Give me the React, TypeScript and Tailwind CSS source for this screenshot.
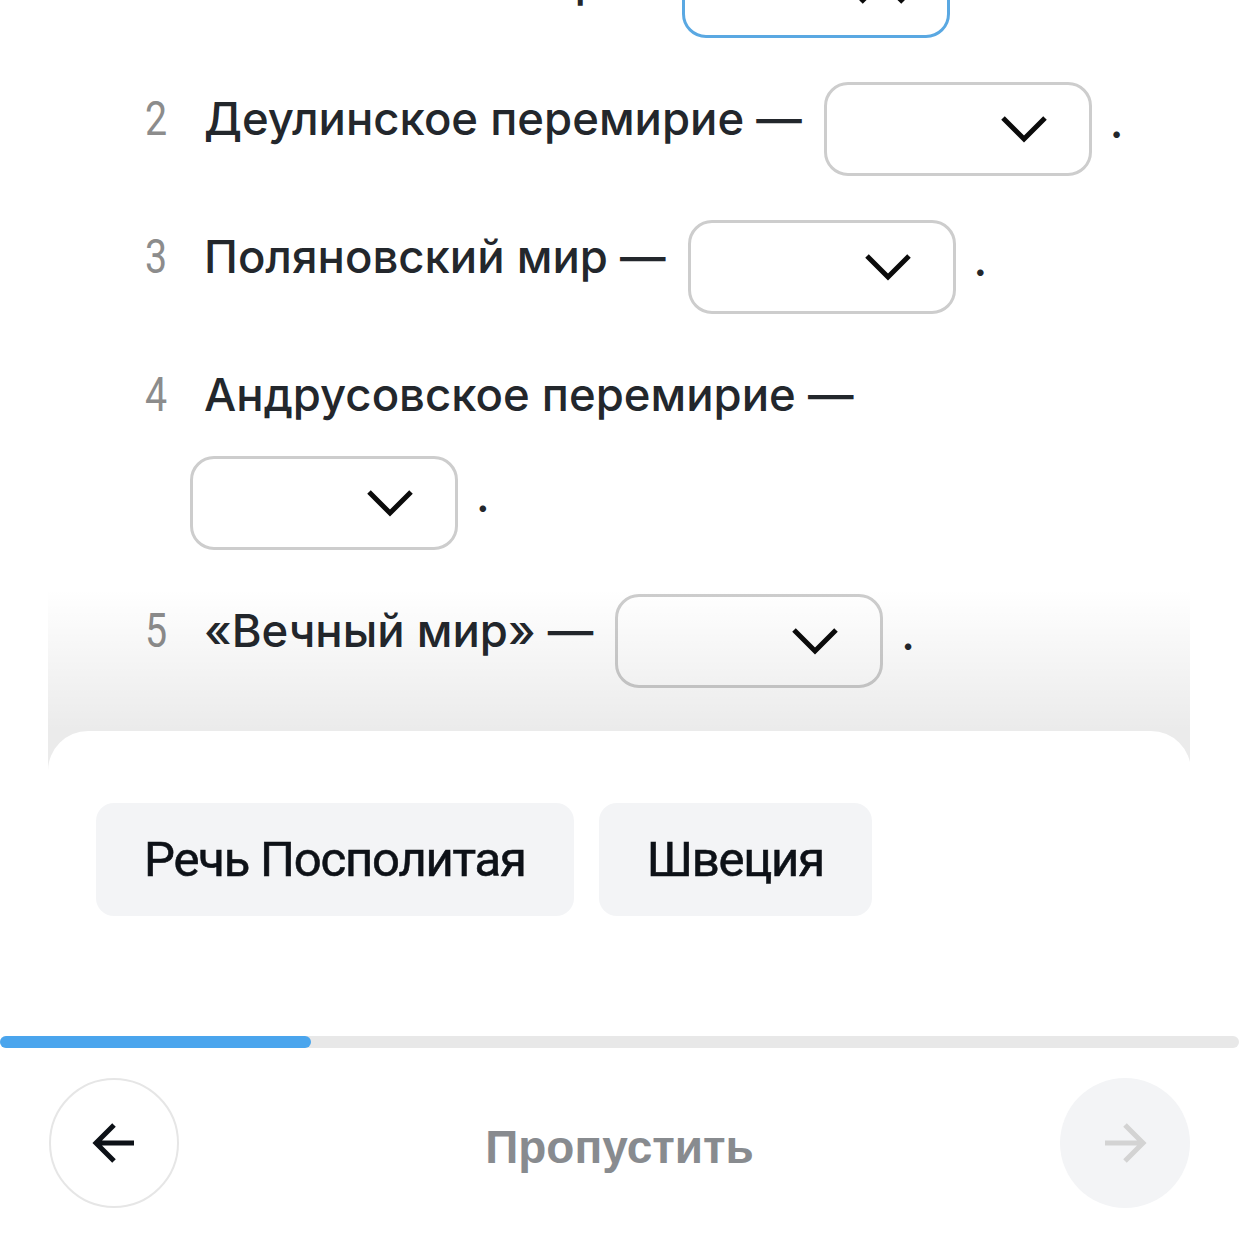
import { ReactNode } from "react";

const rows = [
  { n: 1, text: "Столбовский мир —", active: true },
  { n: 2, text: "Деулинское перемирие —" },
  { n: 3, text: "Поляновский мир —" },
  { n: 4, text: "Андрусовское перемирие —" },
  { n: 5, text: "«Вечный мир» —" },
];

const options = ["Речь Посполитая", "Швеция"];

const Chevron = ({ up }: { up?: boolean }) => (
  <svg width="48" height="28" viewBox="0 0 48 28" fill="none">
    <polyline
      points={up ? "3,25 24,4 45,25" : "3,3 24,24 45,3"}
      stroke="#0b0b0b"
      strokeWidth="5"
    />
  </svg>
);

const Select = ({ active }: { active?: boolean }) => (
  <div
    className={`w-[268px] h-[94px] rounded-[24px] border-[3px] flex items-center justify-end pr-[41px] bg-white ${
      active ? "border-[#5aa8e2]" : "border-[#cdcdcd]"
    }`}
  >
    <Chevron up={active} />
  </div>
);

const Line = ({ children }: { children: ReactNode }) => (
  <div className="h-[94px] flex items-center pb-[20px]">{children}</div>
);

export default function App() {
  return (
    <div className="w-full h-[1240px] bg-white overflow-hidden flex flex-col font-['Inter',sans-serif] text-[#23272c]">
      {/* Question list */}
      <div className="relative h-[771px] overflow-hidden">
        <div className="-mt-[56px] pl-[145px] flex flex-col gap-y-[44px]">
          {rows.map((row) => (
            <div key={row.n} className="flex">
              <div className="w-[45px] shrink-0 font-['Roboto',sans-serif] text-[48px] text-[#8c8c8c]">
                <Line>
                  <span className="inline-block scale-x-[0.82] origin-left">{row.n}</span>
                </Line>
              </div>
              <div className="w-[960px] flex flex-wrap items-center gap-x-[22px] gap-y-[4px]">
                <Line>
                  <span className="pl-[14px] text-[45.5px] font-medium leading-[60px] whitespace-nowrap">{row.text}</span>
                </Line>
                <div className="flex items-center gap-x-[18px]">
                  <Select active={row.active} />
                  <span className="text-[45px] font-medium leading-none pb-[16px]">.</span>
                </div>
              </div>
            </div>
          ))}
        </div>
        {/* fade behind the answer sheet */}
        <div className="absolute bottom-0 left-[48px] right-[49px] flex flex-col">
          <div className="h-[142px] bg-gradient-to-b from-transparent to-black/[0.08]" />
          <div className="h-[40px] bg-black/[0.08]" />
        </div>
      </div>

      {/* Answer bank */}
      <div className="relative z-10 -mt-[40px] mx-[48px] h-[305px] rounded-t-[40px] bg-white px-[48px] pt-[72px]">
        <div className="flex gap-[25px]">
          {options.map((o) => (
            <button
              key={o}
              className="h-[113px] px-[48px] rounded-[18px] bg-[#f3f4f6] font-['Roboto',sans-serif] text-[49px] tracking-[-1.2px] text-[#0d1117] [-webkit-text-stroke:0.6px_#0d1117]"
            >
              {o}
            </button>
          ))}
        </div>
      </div>

      {/* Progress */}
      <div className="h-[12px] w-full rounded-full bg-[#e8e8e8]">
        <div className="h-full w-[311px] rounded-full bg-[#4aa5ed]" />
      </div>

      {/* Footer */}
      <div className="flex items-center justify-between px-[49px] pt-[30px]">
        <button className="w-[130px] h-[130px] rounded-full border-2 border-[#e6e6e6] flex items-center justify-center">
          <svg width="48" height="48" viewBox="0 0 48 48" fill="none">
            <path d="M44 24H6M24 6L6 24l18 18" stroke="#0d1117" strokeWidth="5" />
          </svg>
        </button>
        <span className="pt-[8px] font-['Liberation_Sans',sans-serif] font-bold text-[46px] text-[#888b8f]">Пропустить</span>
        <button className="w-[130px] h-[130px] rounded-full bg-[#f3f4f6] flex items-center justify-center">
          <svg width="48" height="48" viewBox="0 0 48 48" fill="none">
            <path d="M4 24h38M24 6l18 18-18 18" stroke="#d3d3d3" strokeWidth="5" />
          </svg>
        </button>
      </div>
    </div>
  );
}
